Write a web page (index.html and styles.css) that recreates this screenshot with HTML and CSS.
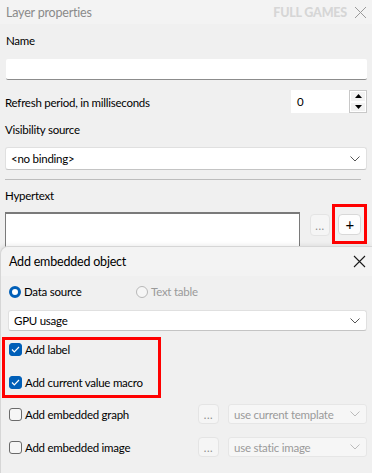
FILE: index.html
```html
<!DOCTYPE html>
<html lang="en">
<head>
  <meta charset="UTF-8">
  <title>Layer properties</title>
  <link rel="stylesheet" href="styles.css">
</head>
<body>
  <div class="janela">
    <div class="titulo">
      <span class="titulo-texto">Layer properties</span>
      <span class="marca">FULL GAMES</span>
      <svg class="fechar" width="13" height="13" viewBox="0 0 13 13"><path d="M1 1 L12 12 M12 1 L1 12" stroke="#9a9a9a" stroke-width="1"/></svg>
    </div>
    <div class="corpo">
      <div class="rotulo r-nome">Name</div>
      <div class="campo nome"></div>

      <div class="linha refresh">
        <span>Refresh period, in milliseconds</span>
        <div class="spin">
          <div class="spin-campo">0</div>
          <div class="spin-botoes">
            <div class="spin-b"><svg width="7" height="4" viewBox="0 0 7 4"><path d="M0 4 L3.5 0 L7 4 Z" fill="#000"/></svg></div>
            <div class="spin-b"><svg width="7" height="4" viewBox="0 0 7 4"><path d="M0 0 L3.5 4 L7 0 Z" fill="#000"/></svg></div>
          </div>
        </div>
      </div>

      <div class="rotulo r-vis">Visibility source</div>
      <div class="combo vis">
        <span>&lt;no binding&gt;</span>
        <svg class="seta" width="10" height="6" viewBox="0 0 10 6"><path d="M0.5 0.5 L5 5 L9.5 0.5" fill="none" stroke="#555" stroke-width="1"/></svg>
      </div>

      <div class="separador"></div>

      <div class="rotulo r-hyper">Hypertext</div>
      <div class="linha hyper">
        <div class="texto-area"></div>
        <div class="botao pontos">...</div>
        <div class="destaque-botao">
          <div class="botao mais">+</div>
        </div>
      </div>
    </div>
  </div>

  <div class="dialogo">
    <div class="titulo-dialogo">
      <span>Add embedded object</span>
      <svg width="13" height="13" viewBox="0 0 13 13"><path d="M1 1 L12 12 M12 1 L1 12" stroke="#1a1a1a" stroke-width="1.1"/></svg>
    </div>
    <div class="corpo-dialogo">
      <div class="linha radios">
        <label class="opcao"><span class="radio marcado"></span>Data source</label>
        <label class="opcao desativado"><span class="radio"></span>Text table</label>
      </div>
      <div class="combo gpu">
        <span>GPU usage</span>
        <svg class="seta" width="10" height="6" viewBox="0 0 10 6"><path d="M0.5 0.5 L5 5 L9.5 0.5" fill="none" stroke="#555" stroke-width="1"/></svg>
      </div>

      <div class="destaque-caixas">
        <label class="opcao"><span class="caixa marcada"><svg width="9" height="7" viewBox="0 0 9 7"><path d="M1 3.5 L3.3 5.8 L8 1" fill="none" stroke="#fff" stroke-width="1.2"/></svg></span>Add label</label>
        <label class="opcao"><span class="caixa marcada"><svg width="9" height="7" viewBox="0 0 9 7"><path d="M1 3.5 L3.3 5.8 L8 1" fill="none" stroke="#fff" stroke-width="1.2"/></svg></span>Add current value macro</label>
      </div>

      <div class="linha extra">
        <label class="opcao"><span class="caixa"></span>Add embedded graph</label>
        <div class="botao pontos inativo">...</div>
        <div class="combo inativo-combo">
          <span>use current template</span>
          <svg class="seta" width="10" height="6" viewBox="0 0 10 6"><path d="M0.5 0.5 L5 5 L9.5 0.5" fill="none" stroke="#bbb" stroke-width="1"/></svg>
        </div>
      </div>
      <div class="linha extra">
        <label class="opcao"><span class="caixa"></span>Add embedded image</label>
        <div class="botao pontos inativo">...</div>
        <div class="combo inativo-combo">
          <span>use static image</span>
          <svg class="seta" width="10" height="6" viewBox="0 0 10 6"><path d="M0.5 0.5 L5 5 L9.5 0.5" fill="none" stroke="#bbb" stroke-width="1"/></svg>
        </div>
      </div>
    </div>
  </div>
</body>
</html>
```

FILE: styles.css
```css
body {
  margin: 0;
  padding: 0;
  width: 372px;
  height: 473px;
  overflow: hidden;
  position: relative;
  background: #f0f0f0;
  font-family: "Lato", "Noto Sans", sans-serif;
  font-size: 11.5px;
  letter-spacing: -0.25px;
  color: #000;
  white-space: nowrap;
}
.janela {
  height: 473px;
}
.titulo {
  height: 24px;
  background: #f3f3f3;
  display: flex;
  align-items: center;
  padding: 0 5px 0 6px;
}
.titulo-texto {
  color: #8a8a8a;
  font-size: 12.5px;
  letter-spacing: -0.2px;
  flex: 1;
}
.marca {
  color: #d6d6d6;
  font-weight: 900;
  font-size: 12.5px;
  letter-spacing: -0.2px;
  margin-right: 7px;
}
.fechar {
  margin-top: 1px;
}
.corpo {
  padding: 0 5px;
}
.rotulo {
  height: 16px;
  line-height: 16px;
}
.r-nome {
  margin-top: 9px;
  padding-left: 1px;
}
.campo {
  background: #fff;
  border-bottom: 1px solid #8c8c8c;
  border-radius: 2px;
}
.nome {
  margin: 10px 0 0 1px;
  height: 20px;
}
.linha {
  display: flex;
  align-items: center;
}
.refresh {
  margin-top: 10px;
  height: 23px;
  justify-content: space-between;
}
.refresh span {
  padding-top: 1px;
}
.spin {
  display: flex;
  height: 23px;
}
.spin-campo {
  width: 52px;
  background: #fff;
  padding-left: 6px;
  line-height: 23px;
}
.spin-botoes {
  width: 16px;
  border: 1px solid #c8c8c8;
  display: flex;
  flex-direction: column;
  background: #e6e6e6;
}
.spin-b {
  flex: 1;
  display: flex;
  align-items: center;
  justify-content: center;
  background: #f2f2f2;
  border: 1px solid #fff;
}
.r-vis {
  margin-top: 9px;
}
.combo {
  display: flex;
  align-items: center;
  justify-content: space-between;
  background: #fff;
  border: 1px solid #e0e0e0;
  border-bottom-color: #c4c4c4;
  border-radius: 3px;
  padding: 0 6px 0 5px;
}
.vis {
  margin-top: 9px;
  height: 21px;
}
.separador {
  margin: 9px 6px 0 0;
  height: 1px;
  background: #bdbdbd;
}
.r-hyper {
  margin-top: 8px;
}
.hyper {
  margin-top: 8px;
  align-items: flex-start;
}
.texto-area {
  width: 296px;
  height: 40px;
  background: #fff;
  border: 1px solid #7a7a7a;
  border-top-width: 2px;
  border-bottom: none;
}
.botao {
  background: #fdfdfd;
  border: 1px solid #d8d8d8;
  border-radius: 4px;
  display: flex;
  align-items: center;
  justify-content: center;
}
.pontos {
  margin: 2px 0 0 10px;
  width: 19px;
  height: 20px;
  background: #f5f5f5;
  border-color: #e4e4e4;
  color: #8a8a8a;
  font-size: 11px;
  letter-spacing: 0.5px;
}
.destaque-botao {
  margin: -8px 0 0 2px;
  width: 29px;
  height: 34px;
  border: 3px solid #f00;
  display: flex;
  align-items: center;
  justify-content: center;
}
.mais {
  width: 21px;
  height: 19px;
  font-size: 15px;
}

/* janela sobreposta */
.dialogo {
  position: absolute;
  top: 246px;
  left: 0;
  right: 0;
  bottom: 0;
  background: #f0f0f0;
  border-top: 1px solid #d6d6d6;
  border-left: 1px solid #d6d6d6;
  border-top-left-radius: 8px;
  box-shadow: -1px -1px 4px rgba(0, 0, 0, 0.08);
}
.titulo-dialogo {
  height: 29px;
  background: #f3f3f3;
  border-top-left-radius: 8px;
  display: flex;
  align-items: center;
  justify-content: space-between;
  padding: 0 6px 0 8px;
  font-size: 12.5px;
  letter-spacing: -0.2px;
}
.corpo-dialogo {
  padding: 0 5px 0 1px;
}
.opcao {
  display: flex;
  align-items: center;
  gap: 3px;
}
.desativado {
  color: #9a9a9a;
}
.radios {
  margin-top: 7px;
  height: 17px;
  padding-left: 7px;
}
.radios .opcao:first-child {
  width: 127px;
}
.radio {
  width: 12px;
  height: 12px;
  border-radius: 50%;
  border: 1px solid #b8b8b8;
  box-sizing: border-box;
  background: #f6f6f6;
}
.radio.marcado {
  border: 3.5px solid #005fb8;
  background: #fff;
}
.gpu {
  margin: 10px 0 0 6px;
  height: 19px;
}
.destaque-caixas {
  margin-top: 6px;
  width: 149px;
  height: 53px;
  border: 3px solid #f00;
  display: flex;
  flex-direction: column;
  gap: 19px;
  padding: 2px 0 0 4px;
}
.destaque-caixas .opcao {
  height: 14px;
}
.caixa {
  width: 13px;
  height: 13px;
  box-sizing: border-box;
  border: 1px solid #6a6a6a;
  border-radius: 3px;
  background: #f6f6f6;
  display: flex;
  align-items: center;
  justify-content: center;
}
.caixa.marcada {
  background: #005fb8;
  border-color: #005fb8;
}
.extra {
  height: 20px;
  margin-top: 6px;
  padding-left: 7px;
}
.extra + .extra {
  margin-top: 13px;
}
.extra .opcao {
  width: 189px;
}
.inativo {
  margin: 0;
  height: 18px;
}
.inativo-combo {
  margin-left: 9px;
  flex: 1;
  height: 18px;
  background: #f6f6f6;
  border-color: #e6e6e6;
  color: #9a9a9a;
}
```
